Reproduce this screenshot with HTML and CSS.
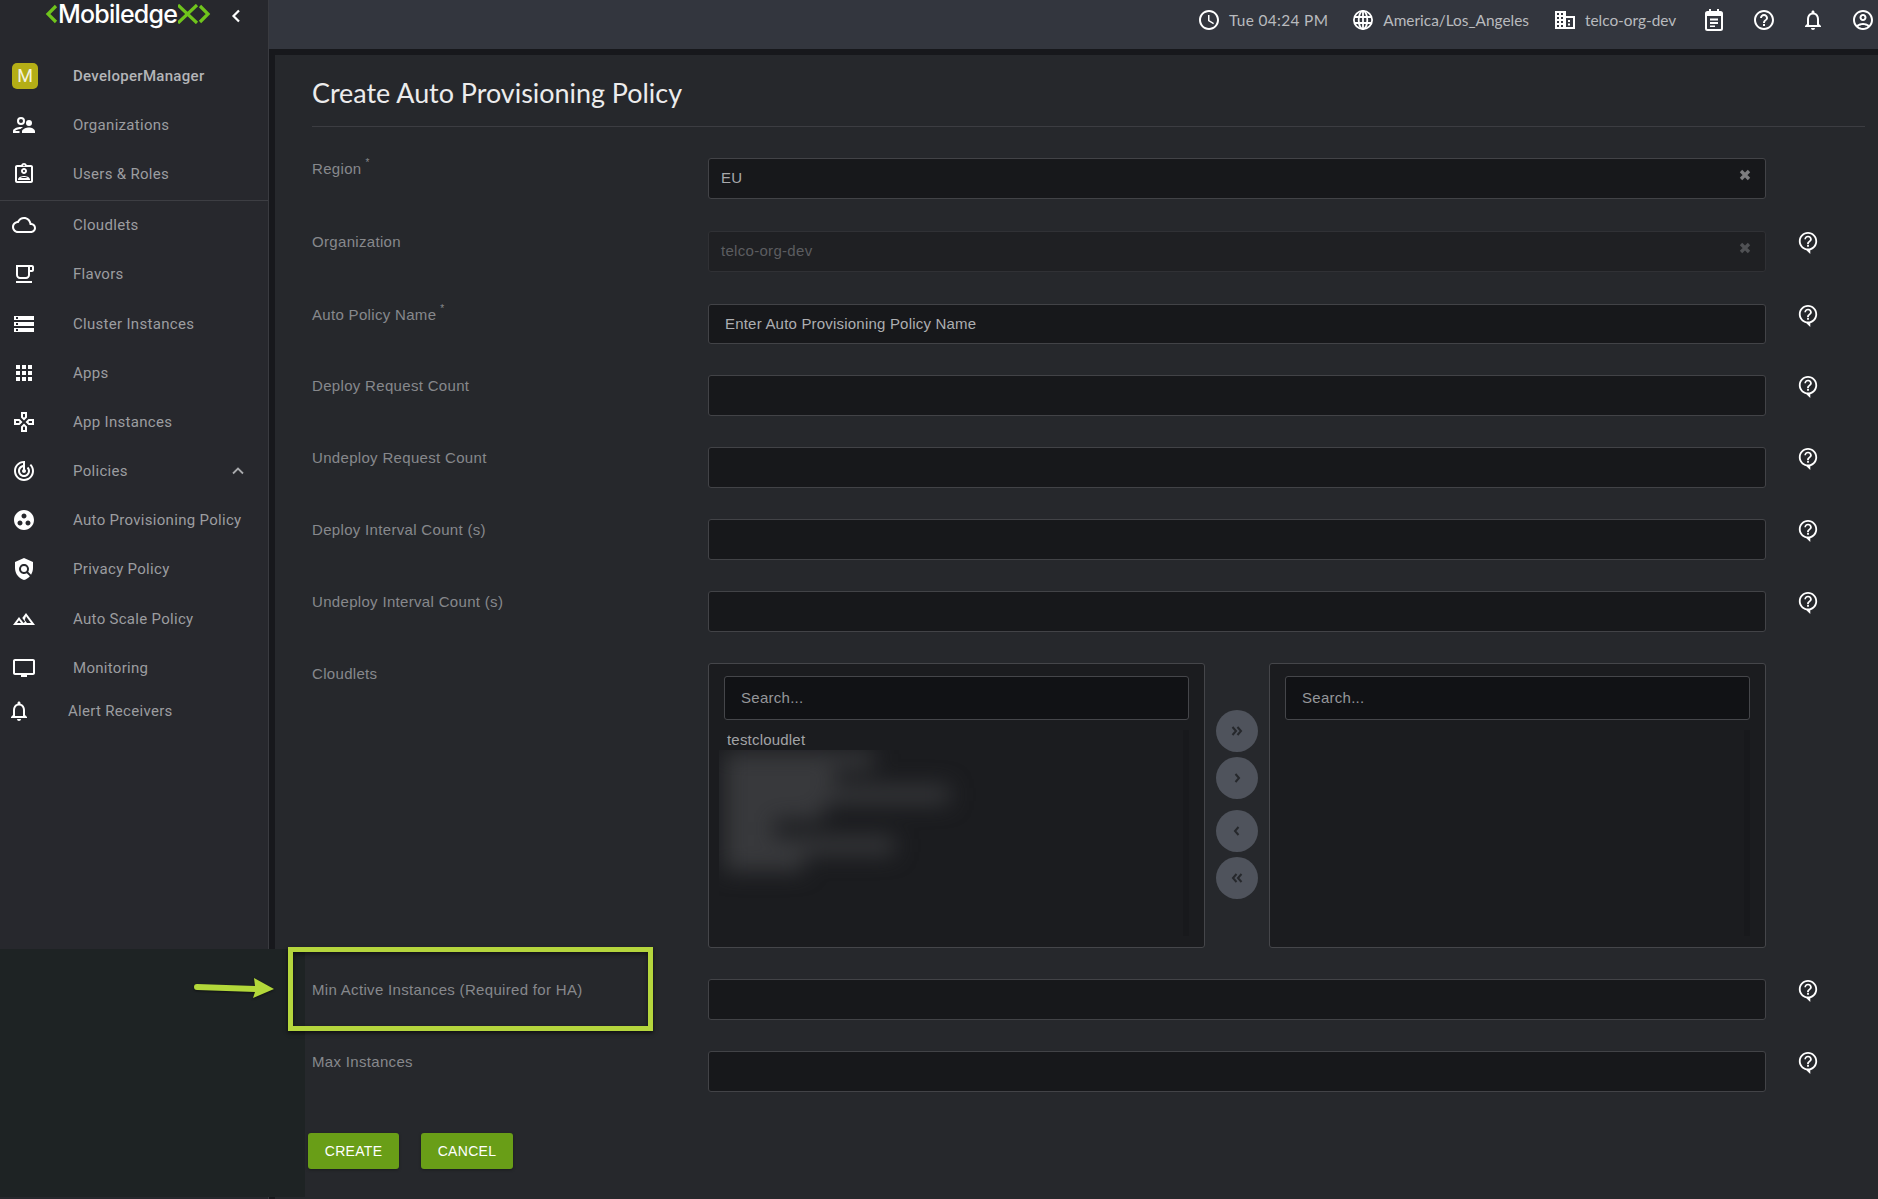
FILE: index.html
```html
<!DOCTYPE html>
<html lang="en">
<head>
<meta charset="utf-8">
<title>Create Auto Provisioning Policy</title>
<link rel="stylesheet" href="styles.css">
</head>
<body>
<svg class="defs" width="0" height="0">
  <symbol id="q" viewBox="0 0 24 24"><path d="M11 18h2v-2h-2v2zm1-16C6.48 2 2 6.48 2 12s4.48 10 10 10 10-4.48 10-10S17.52 2 12 2zm0 18c-4.41 0-8-3.59-8-8s3.59-8 8-8 8 3.59 8 8-3.59 8-8 8zm0-14c-2.21 0-4 1.79-4 4h2c0-1.1.9-2 2-2s2 .9 2 2c0 2-3 1.75-3 5h2c0-2.25 3-2.5 3-5 0-2.21-1.79-4-4-4z"/></symbol>
  <symbol id="hint" viewBox="0 0 24 26"><path d="M12 1C6.500 1 2 5.500 2 11c0 4.900 3.500 8.900 8.200 9.800L14.500 25v-4.200C19 19.700 22 15.700 22 11 22 5.500 17.500 1 12 1zm0 18c-4.400 0-8-3.600-8-8s3.600-8 8-8 8 3.600 8 8-3.600 8-8 8zM11 17h2v-2.200h-2V17zm1-12c-2.200 0-4 1.800-4 4h1.800c0-1.200 1-2.200 2.200-2.200s2.200 1 2.200 2.200c0 2-3.200 1.900-3.200 5.200h2c0-2.300 3.200-2.700 3.200-5.200 0-2.200-1.800-4-4-4z"/></symbol>
  <symbol id="clr" viewBox="0 0 12 12"><path d="M2 2l8 8M10 2l-8 8" fill="none" stroke="currentColor" stroke-width="3.4"/></symbol>
  <symbol id="bell" viewBox="0 0 24 24"><path d="M12 22c1.100 0 2-.9 2-2h-4c0 1.100.9 2 2 2zm6-6v-5c0-3.070-1.640-5.640-4.500-6.320V4c0-.83-.67-1.500-1.500-1.500s-1.500.67-1.500 1.500v.68C7.630 5.360 6 7.920 6 11v5l-2 2v1h16v-1l-2-2zm-2 1H8v-6c0-2.480 1.510-4.500 4-4.500s4 2.020 4 4.500v6z"/></symbol>
</svg>

<aside class="sidebar">
  <div class="logo">
    <svg class="logo-l" viewBox="0 0 13 20"><path d="M11 2L3 10l8 8" fill="none" stroke="#6fc41c" stroke-width="3.200"/></svg>
    <span class="logo-text">Mobiledge</span>
    <svg class="logo-r" viewBox="0 0 33 20"><path d="M0 1l19 18M19 1L0 19" fill="none" stroke="#6fc41c" stroke-width="3.200"/><path d="M22 2l8 8-8 8" fill="none" stroke="#6fc41c" stroke-width="3.200"/></svg>
    <svg class="logo-back" viewBox="0 0 10 14"><path d="M8 1.500L2.500 7 8 12.500" fill="none" stroke="#fff" stroke-width="2.200"/></svg>
  </div>
  <nav class="nav">
    <div class="nav-row nav-user"><span class="avatar">M</span><span class="nav-name">DeveloperManager</span></div>
    <div class="nav-row"><svg class="ico" viewBox="0 0 24 24"><path fill-rule="evenodd" d="M9 4a4 4 0 1 1 0 8 4 4 0 0 1 0-8zm0 2a2 2 0 1 0 0 4 2 2 0 0 0 0-4zM17 7a3 3 0 1 1 0 6 3 3 0 0 1 0-6zM1 20v-2c0-2.500 4.500-4 8-4 .7 0 1.400.06 2 .17-1 .5-1.800 1.100-2.400 1.900C6.200 16.200 3.500 17 3.300 18H7.500v2H1zM10 20v-1.500c0-2.500 4.500-4 7-4s6 1.500 6 4V20H10z"/></svg><span>Organizations</span></div>
    <div class="nav-row"><svg class="ico" viewBox="0 0 24 24"><path d="M19 3h-4.180C14.400 1.840 13.300 1 12 1s-2.400.84-2.820 2H5c-1.100 0-2 .9-2 2v14c0 1.100.9 2 2 2h14c1.100 0 2-.9 2-2V5c0-1.100-.9-2-2-2zm-7-.25c.22 0 .41.1.55.25.12.13.2.31.2.5 0 .41-.34.75-.75.75s-.75-.34-.75-.75c0-.19.08-.37.2-.5.14-.15.33-.25.55-.25zM19 19H5V5h14v14zM12 6c-1.650 0-3 1.350-3 3s1.350 3 3 3 3-1.350 3-3-1.350-3-3-3zm0 4c-.55 0-1-.45-1-1s.45-1 1-1 1 .45 1 1-.45 1-1 1zm-6 7.470V18h12v-.53c0-2.500-3.970-3.580-6-3.580s-6 1.070-6 3.580zM8.310 16c.69-.56 2.380-1.120 3.690-1.120s3.010.56 3.690 1.120H8.310z"/></svg><span>Users &amp; Roles</span></div>
    <div class="nav-rule"></div>
    <div class="nav-row"><svg class="ico" viewBox="0 0 24 24"><path d="M19.350 10.040C18.670 6.590 15.640 4 12 4 9.110 4 6.600 5.640 5.350 8.040 2.340 8.360 0 10.910 0 14c0 3.310 2.690 6 6 6h13c2.760 0 5-2.240 5-5 0-2.640-2.050-4.780-4.650-4.960zM19 18H6c-2.210 0-4-1.790-4-4 0-2.050 1.530-3.760 3.560-3.970l1.070-.11.5-.95C8.080 7.140 9.940 6 12 6c2.620 0 4.880 1.860 5.390 4.430l.3 1.500 1.530.11c1.560.1 2.780 1.410 2.780 2.960 0 1.650-1.350 3-3 3z"/></svg><span>Cloudlets</span></div>
    <div class="nav-row"><svg class="ico" viewBox="0 0 24 24"><path d="M4 19h16v2H4zM20 3H4v10c0 2.210 1.790 4 4 4h6c2.210 0 4-1.790 4-4v-3h2c1.110 0 2-.89 2-2V5c0-1.110-.89-2-2-2zm-4 10c0 1.100-.9 2-2 2H8c-1.100 0-2-.9-2-2V5h10v8zm4-5h-2V5h2v3z"/></svg><span>Flavors</span></div>
    <div class="nav-row"><svg class="ico" viewBox="0 0 24 24"><path d="M2 20h20v-4H2v4zm2-3h2v2H4v-2zM2 4v4h20V4H2zm4 3H4V5h2v2zm-4 7h20v-4H2v4zm2-3h2v2H4v-2z"/></svg><span>Cluster Instances</span></div>
    <div class="nav-row"><svg class="ico" viewBox="0 0 24 24"><path d="M4 8h4V4H4v4zm6 12h4v-4h-4v4zm-6 0h4v-4H4v4zm0-6h4v-4H4v4zm6 0h4v-4h-4v4zm6-10v4h4V4h-4zm-6 4h4V4h-4v4zm6 6h4v-4h-4v4zm0 6h4v-4h-4v4z"/></svg><span>Apps</span></div>
    <div class="nav-row"><svg class="ico" viewBox="0 0 24 24"><path d="M13 4v2.670l-1 1-1-1V4h2m7 7v2h-2.670l-1-1 1-1H20M6.670 11l1 1-1 1H4v-2h2.670M12 16.330l1 1V20h-2v-2.670l1-1M15 2H9v5.500l3 3 3-3V2zm7 7h-5.500l-3 3 3 3H22V9zM7.500 9H2v6h5.500l3-3-3-3zm4.500 4.500l-3 3V22h6v-5.500l-3-3z"/></svg><span>App Instances</span></div>
    <div class="nav-row"><svg class="ico" viewBox="0 0 24 24"><path d="M19.070 4.930l-1.410 1.410C19.100 7.790 20 9.790 20 12c0 4.420-3.580 8-8 8s-8-3.580-8-8c0-4.080 3.050-7.440 7-7.930v2.020C8.160 6.570 6 9.030 6 12c0 3.310 2.690 6 6 6s6-2.690 6-6c0-1.660-.67-3.160-1.760-4.240l-1.410 1.410C15.550 9.900 16 10.900 16 12c0 2.210-1.790 4-4 4s-4-1.790-4-4c0-1.860 1.280-3.410 3-3.860v2.140c-.6.35-1 .98-1 1.720 0 1.100.9 2 2 2s2-.9 2-2c0-.74-.4-1.380-1-1.720V2h-1C6.480 2 2 6.480 2 12s4.480 10 10 10 10-4.480 10-10c0-2.760-1.120-5.260-2.930-7.070z"/></svg><span class="grow">Policies</span><svg class="caret" viewBox="0 0 12 8"><path d="M1 6.500l5-5 5 5" fill="none" stroke="#a9aaad" stroke-width="1.800"/></svg></div>
    <div class="nav-row"><svg class="ico" viewBox="0 0 24 24"><path d="M12 2C6.480 2 2 6.480 2 12s4.480 10 10 10 10-4.480 10-10S17.520 2 12 2zM8 17.500c-1.380 0-2.500-1.120-2.500-2.500s1.120-2.500 2.500-2.500 2.500 1.120 2.500 2.500-1.120 2.500-2.500 2.500zM9.500 8c0-1.380 1.120-2.500 2.500-2.500s2.500 1.120 2.500 2.500-1.120 2.500-2.500 2.500S9.500 9.380 9.500 8zm6.500 9.500c-1.380 0-2.500-1.120-2.500-2.500s1.120-2.500 2.500-2.500 2.500 1.120 2.500 2.500-1.120 2.500-2.500 2.500z"/></svg><span>Auto Provisioning Policy</span></div>
    <div class="nav-row"><svg class="ico" viewBox="0 0 24 24"><path d="M21 5l-9-4-9 4v6c0 5.550 3.840 10.740 9 12 2.300-.56 4.330-1.900 5.880-3.710l-3.120-3.120c-1.940 1.290-4.580 1.070-6.290-.64-1.950-1.950-1.950-5.120 0-7.070 1.950-1.950 5.120-1.950 7.070 0 1.710 1.710 1.920 4.350.64 6.290l2.900 2.900C20.290 15.690 21 13.380 21 11V5z"/><circle cx="12" cy="12" r="3"/></svg><span>Privacy Policy</span></div>
    <div class="nav-row"><svg class="ico" viewBox="0 0 24 24"><path fill-rule="evenodd" d="M14 6l-3.750 5 2.850 3.800-1.600 1.200C9.810 13.750 7 10 7 10l-6 8h22L14 6zM5 16l2-2.670L9 16H5zM15 16l-2.250-3L14 9.330 19 16h-4z"/></svg><span>Auto Scale Policy</span></div>
    <div class="nav-row"><svg class="ico" viewBox="0 0 24 24"><path d="M21 3H3c-1.100 0-2 .9-2 2v12c0 1.100.9 2 2 2h6v2h6v-2h6c1.100 0 2-.9 2-2V5c0-1.100-.9-2-2-2zm0 14H3V5h18v12z"/></svg><span>Monitoring</span></div>
    <div class="nav-row nav-alert"><svg class="ico"><use href="#bell"/></svg><span>Alert Receivers</span></div>
  </nav>
</aside>

<div class="content">
  <header class="topbar">
    <div class="top-item top-time"><svg class="ico" viewBox="0 0 24 24"><path d="M11.990 2C6.470 2 2 6.480 2 12s4.470 10 9.990 10C17.520 22 22 17.520 22 12S17.520 2 11.990 2zM12 20c-4.420 0-8-3.580-8-8s3.580-8 8-8 8 3.580 8 8-3.580 8-8 8zm.5-13H11v6l5.250 3.150.75-1.230-4.500-2.670z"/></svg><span>Tue 04:24 PM</span></div>
    <div class="top-item top-zone"><svg class="ico" viewBox="0 0 24 24"><g fill="none" stroke="#fff" stroke-width="1.800"><circle cx="12" cy="12" r="9.100"/><ellipse cx="12" cy="12" rx="4.300" ry="9.100"/><path d="M12 3v18M3 9h18M3 15h18"/></g></svg><span>America/Los_Angeles</span></div>
    <div class="top-item"><svg class="ico" viewBox="0 0 24 24"><path fill-rule="evenodd" d="M2 3h11v5h9v13H2V3zm2 2v2h2V5H4zm4 0v2h2V5H8zM4 9v2h2V9H4zm4 0v2h2V9H8zm-4 4v2h2v-2H4zm4 0v2h2v-2H8zm-4 4v2h2v-2H4zm4 0v2h2v-2H8zm5-7v9h7v-9h-7zm2 2h2v2h-2v-2zm0 3.500h2v2h-2v-2z"/></svg><span>telco-org-dev</span></div>
    <div class="top-icons">
      <svg class="ico" viewBox="0 0 24 24"><path fill-rule="evenodd" d="M7 1h2v2h6V1h2v2h1.500A2.500 2.500 0 0 1 21 5.500v15a2.500 2.500 0 0 1-2.500 2.500h-13A2.500 2.500 0 0 1 3 20.500v-15A2.500 2.500 0 0 1 5.500 3H7V1zM5 8v12.500c0 .3.2.5.5.5h13c.3 0 .5-.2.5-.5V8H5zm3 2.500h8v2H8v-2zm0 3.500h8v2H8v-2zm0 3.500h5v1.500H8v-1.500z"/></svg>
      <svg class="ico"><use href="#q"/></svg>
      <svg class="ico"><use href="#bell"/></svg>
      <svg class="ico" viewBox="0 0 24 24"><path d="M12 2C6.480 2 2 6.480 2 12s4.480 10 10 10 10-4.480 10-10S17.520 2 12 2zM7.350 18.500C8.660 17.560 10.260 17 12 17s3.340.56 4.650 1.500c-1.310.94-2.910 1.500-4.650 1.500s-3.340-.56-4.650-1.500zm10.790-1.380C16.450 15.800 14.320 15 12 15s-4.450.8-6.140 2.120C4.700 15.730 4 13.950 4 12c0-4.420 3.580-8 8-8s8 3.580 8 8c0 1.950-.7 3.730-1.860 5.120zM12 6c-1.930 0-3.500 1.570-3.500 3.500S10.070 13 12 13s3.500-1.570 3.500-3.500S13.930 6 12 6zm0 5c-.83 0-1.500-.67-1.500-1.500S11.170 8 12 8s1.500.67 1.500 1.500S12.830 11 12 11z"/></svg>
    </div>
  </header>

  <main class="main">
    <h1 class="title">Create Auto Provisioning Policy</h1>
    <form class="form">
      <div class="row row-a">
        <label class="label">Region<sup class="req">*</sup></label>
        <div class="field field-select"><span>EU</span><svg class="clr"><use href="#clr"/></svg></div>
      </div>
      <div class="row row-a">
        <label class="label">Organization</label>
        <div class="field field-select field-off"><span>telco-org-dev</span><svg class="clr"><use href="#clr"/></svg></div>
        <svg class="hint"><use href="#hint"/></svg>
      </div>
      <div class="row row-b">
        <label class="label">Auto Policy Name<sup class="req">*</sup></label>
        <div class="field field-text"><span>Enter Auto Provisioning Policy Name</span></div>
        <svg class="hint"><use href="#hint"/></svg>
      </div>
      <div class="row">
        <label class="label">Deploy Request Count</label>
        <div class="field"></div>
        <svg class="hint"><use href="#hint"/></svg>
      </div>
      <div class="row">
        <label class="label">Undeploy Request Count</label>
        <div class="field"></div>
        <svg class="hint"><use href="#hint"/></svg>
      </div>
      <div class="row">
        <label class="label">Deploy Interval Count (s)</label>
        <div class="field"></div>
        <svg class="hint"><use href="#hint"/></svg>
      </div>
      <div class="row">
        <label class="label">Undeploy Interval Count (s)</label>
        <div class="field"></div>
        <svg class="hint"><use href="#hint"/></svg>
      </div>
      <div class="row row-dual">
        <label class="label">Cloudlets</label>
        <div class="dual">
          <div class="pane">
            <div class="search">Search...</div>
            <div class="list">
              <div class="list-item">testcloudlet</div>
              <div class="blur-clip">
                <div class="blur">
                  <i style="width:150px"></i><i style="width:110px"></i><i style="width:225px"></i><i style="width:100px"></i><i style="width:50px"></i><i style="width:170px"></i><i style="width:80px"></i>
                </div>
              </div>
            </div>
          </div>
          <div class="moves">
            <div class="move-pair">
              <span class="move"><svg viewBox="0 0 12 10"><path d="M1.500 1l3.500 4-3.500 4M6.500 1L10 5 6.500 9"/></svg></span>
              <span class="move"><svg viewBox="0 0 12 10"><path d="M4.500 1L8 5 4.500 9"/></svg></span>
            </div>
            <div class="move-pair">
              <span class="move"><svg viewBox="0 0 12 10"><path d="M7.500 1L4 5l3.500 4"/></svg></span>
              <span class="move"><svg viewBox="0 0 12 10"><path d="M5.500 1L2 5l3.500 4M10.500 1L7 5l3.500 4"/></svg></span>
            </div>
          </div>
          <div class="pane">
            <div class="search">Search...</div>
            <div class="list"></div>
          </div>
        </div>
      </div>
      <div class="row">
        <label class="label">Min Active Instances (Required for HA)</label>
        <div class="field"></div>
        <svg class="hint"><use href="#hint"/></svg>
      </div>
      <div class="row">
        <label class="label">Max Instances</label>
        <div class="field"></div>
        <svg class="hint"><use href="#hint"/></svg>
      </div>
      <div class="actions">
        <button class="btn" type="button">CREATE</button>
        <button class="btn" type="button">CANCEL</button>
      </div>
    </form>
  </main>
</div>

<div class="patch"></div>
<div class="callout"></div>
<svg class="arrow" viewBox="0 0 84 24"><path d="M5 7L63 9 62 1 82 12 61 21 63 15 5 13A3 3 0 0 1 5 7z" fill="#b3d83a"/></svg>
</body>
</html>
```
FILE: styles.css
```css
* { box-sizing: border-box; }
html, body { margin: 0; height: 100%; }
body {
  display: flex;
  height: 1199px;
  overflow: hidden;
  background: #17181c;
  font-family: "Liberation Sans", Arial, sans-serif;
}
.defs { position: absolute; }
svg { display: block; flex: none; }
.ico { width: 24px; height: 24px; fill: #fff; }

.sidebar {
  width: 269px;
  flex: none;
  background: #27282d;
  border-right: 1px solid #3a3b40;
  font-family: Roboto, sans-serif;
  font-size: 15px;
  letter-spacing: .3px;
  color: #9c9da0;
}
.logo { height: 51px; display: flex; align-items: flex-start; padding: 4px 0 0 45px; }
.logo-l { width: 13px; height: 20px; }
.logo-text {
  font-family: Inter, sans-serif;
  font-weight: 500;
  font-size: 25px;
  line-height: 27px;
  letter-spacing: -.8px;
  color: #fff;
  margin-top: -3px;
}
.logo-r { width: 33px; height: 20px; margin-left: 1px; }
.logo-back { width: 10px; height: 14px; margin: 5px 0 0 20px; }
.nav-row { height: 49.2px; display: flex; align-items: center; padding: 0 24px 0 12px; gap: 37px; }
.nav-rule { height: 1px; margin-top: 1px; background: #3d3e43; }
.nav-user { gap: 35px; }
.avatar {
  width: 26px; height: 26px; border-radius: 5px;
  background: #b4ae16; color: #f3f3e0;
  font-size: 18px; letter-spacing: 0;
  display: flex; align-items: center; justify-content: center;
}
.nav-name { font-weight: 500; color: #b4b5b8; }
.nav-alert { height: 38px; padding-left: 7px; }
.grow { flex: 1; }
.caret { width: 12px; height: 8px; }

.content { flex: 1; display: flex; flex-direction: column; min-width: 0; }
.topbar {
  height: 49px; flex: none;
  background: #33363e;
  display: flex; align-items: center; justify-content: flex-end;
  gap: 25px;
  padding: 0 3px 10px 0;
  font-family: Lato, sans-serif;
  font-size: 15.4px;
  color: #b9bbbe;
}
.top-item { display: flex; align-items: center; gap: 8px; }
.top-time { letter-spacing: .35px; margin-right: -2px; }
.top-zone { margin-right: -1px; }
.top-icons { display: flex; align-items: center; gap: 25.6px; margin-left: 1px; }

.main {
  flex: 1;
  margin: 6px 0 0 6px;
  background: #26282c;
  padding: 0 13px 0 37px;
}
.title {
  margin: 0;
  height: 72px;
  padding-top: 19px;
  font-family: Lato, sans-serif;
  font-weight: 400;
  font-size: 26.9px;
  line-height: 38px;
  color: #ececec;
  border-bottom: 1px solid #3c3d42;
}
.form { padding-top: 31px; display: flex; flex-direction: column; gap: 31px; }
.row { height: 41px; display: flex; align-items: flex-start; }
.row-a { height: 42px; }
.row-b { height: 40px; }
.label {
  width: 396px; flex: none;
  padding-top: 1px;
  font-size: 15px; line-height: 20px; letter-spacing: .32px;
  color: #87888c;
}
.req { font-size: 10px; line-height: 0; margin-left: 4px; vertical-align: 8px; }
.field {
  width: 1058px; height: 41px; flex: none;
  background: #17181b;
  border: 1px solid #424347;
  border-radius: 3px;
  display: flex; align-items: center;
  font-size: 15px; letter-spacing: .3px;
  color: #a8a9ac;
  padding: 0 0 2px 12px;
}
.row-b .field { height: 40px; }
.field-select { justify-content: space-between; padding-right: 14px; }
.field-text { padding-left: 16px; color: #adaeb1; letter-spacing: .2px; }
.field-off { background: #1f2023; border-color: #303135; color: #5c5d60; }
.clr { width: 12px; height: 12px; margin-top: -5px; color: #7d7d80; }
.field-off .clr { color: #505154; }
.hint { width: 22px; height: 24px; margin: 0 0 0 31px; fill: #fff; }

.row-dual { height: 285px; }
.dual { width: 1058px; flex: none; height: 285px; display: flex; }
.pane {
  width: 497px; flex: none; height: 285px;
  background: #1b1c1f;
  border: 1px solid #45464a;
  border-radius: 3px;
  padding: 12px 15px 11px;
  display: flex; flex-direction: column;
}
.search {
  height: 44px; flex: none;
  background: #111215;
  border: 1px solid #45464a;
  border-radius: 3px;
  padding: 0 0 2px 16px;
  display: flex; align-items: center;
  font-size: 15px; letter-spacing: .27px;
  color: #95969a;
}
.list {
  flex: 1;
  margin-top: 10px;
  margin-left: -5px;
  border-right: 6px solid #18191c;
  display: flex; flex-direction: column;
  min-height: 0;
}
.list-item { height: 20px; padding-left: 8px; font-size: 15px; line-height: 20px; letter-spacing: .2px; color: #a2a3a6; }
.blur-clip { overflow: hidden; height: 165px; }
.blur { filter: blur(11px); padding-top: 2px; }
.blur i { display: block; height: 17px; background: #38393c; margin-left: 5px; }
.moves { width: 64px; flex: none; display: flex; flex-direction: column; align-items: center; padding-top: 47px; gap: 11px; }
.move-pair { display: flex; flex-direction: column; gap: 5px; }
.move {
  width: 42px; height: 42px; border-radius: 50%;
  background: #4f535c;
  display: flex; align-items: center; justify-content: center;
}
.move svg { width: 12px; height: 10px; fill: none; stroke: #26282c; stroke-width: 2; }
.actions { display: flex; gap: 22px; margin: 10px 0 0 -4px; }
.btn {
  width: 91px; height: 36px;
  background: #699e17;
  border: 0; border-radius: 3px;
  color: #fff;
  font-family: "Liberation Sans", Arial, sans-serif;
  font-size: 14px; letter-spacing: .3px;
  box-shadow: 0 1px 3px rgba(0,0,0,.35);
}
.btn + .btn { width: 92px; }

.patch { position: absolute; left: 0; top: 949px; width: 305px; height: 248px; background: #1e2324; }
.callout {
  position: absolute; left: 288px; top: 947px; width: 365px; height: 84px;
  border: 5px solid #b5d63d;
  box-shadow: 0 2px 4px rgba(0,0,0,.6), inset 0 2px 4px rgba(0,0,0,.5);
}
.arrow { position: absolute; left: 192px; top: 977px; width: 84px; height: 24px; filter: drop-shadow(0 1px 1px rgba(0,0,0,.5)); }
```
